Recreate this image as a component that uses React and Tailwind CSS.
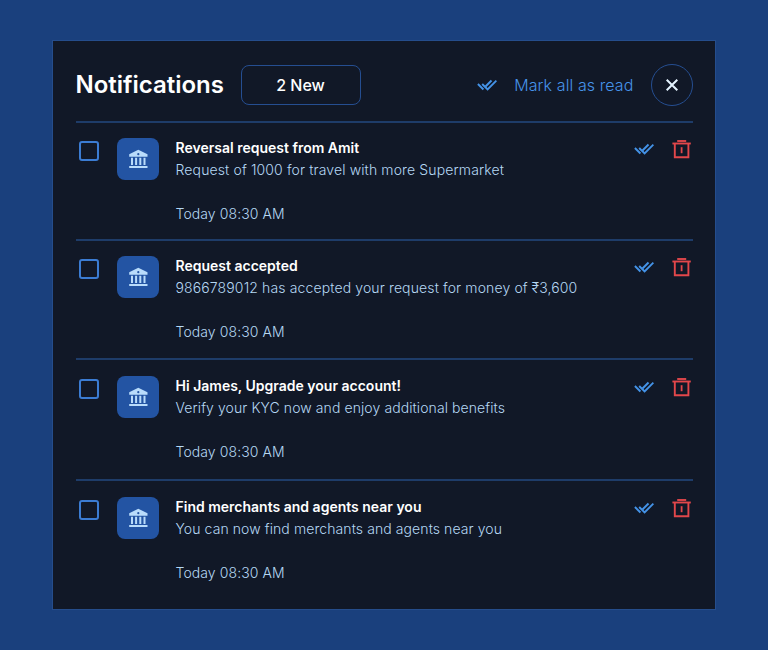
import React from "react";

const items = [
  {
    title: "Reversal request from Amit",
    body: "Request of 1000 for travel with more Supermarket",
    track: "tracking-[0.13px]",
    row: "h-[118px] pt-[15px] border-b-2",
  },
  {
    title: "Request accepted",
    body: "9866789012 has accepted your request for money of ₹3,600",
    track: "tracking-[0.13px]",
    row: "h-[119px] pt-[15px] border-b-2",
  },
  {
    title: "Hi James, Upgrade your account!",
    body: "Verify your KYC now and enjoy additional benefits",
    track: "tracking-[0.09px]",
    row: "h-[121px] pt-4 border-b-2",
  },
  {
    title: "Find merchants and agents near you",
    body: "You can now find merchants and agents near you",
    track: "tracking-[0.09px]",
    row: "h-[121px] pt-4",
  },
];

function DoubleCheck() {
  return (
    <svg className="block h-3 w-5" viewBox="0 0 20 12" fill="none" stroke="#4493e8" strokeWidth="1.9">
      <path d="M0.9 5 L6.4 10.5" />
      <path d="M5.2 5 L10.6 10.4 L19.4 1.6" />
      <path d="M8.5 7.5 L14.5 1.5" />
    </svg>
  );
}

function Trash() {
  return (
    <svg className="block h-5 w-5" viewBox="0 0 20 20" fill="none" stroke="#e2474b" strokeWidth="1.9">
      <path d="M5.2 2 H14.2" />
      <path d="M0.4 4.5 H18.8" />
      <path d="M2.8 4.4 V18.3 H16.4 V4.4" />
      <path d="M9.6 8.2 V14.2" strokeWidth="1.8" />
    </svg>
  );
}

function Bank() {
  return (
    <svg className="block h-5 w-5" viewBox="0 0 20 20" fill="#b9dcfb">
      <path fillRule="evenodd" d="M10.3 0.8 L19.5 5.3 V7.8 H1.2 V5.3 Z M10.3 4.1 A1.1 1.1 0 1 0 10.3 6.3 A1.1 1.1 0 1 0 10.3 4.1 Z" />
      <path d="M3 8.7 H5 V16 H3 Z M7.1 8.7 H9.1 V16 H7.1 Z M11.3 8.7 H13.3 V16 H11.3 Z M15.5 8.7 H17.5 V16 H15.5 Z" />
      <path d="M1.2 17 H19.5 V19 H1.2 Z" />
    </svg>
  );
}

function Row({ item }) {
  return (
    <li className={`flex items-start border-[#1e3c69] ${item.row}`}>
      <span className="ml-[3px] mt-[3px] h-5 w-5 shrink-0 rounded-[3px] border-2 border-[#3b7cd3]" />
      <span className="ml-[18.5px] flex h-[42px] w-[42px] shrink-0 items-center justify-center rounded-lg bg-[#2354a3]">
        <Bank />
      </span>
      <div className="-mt-px ml-[16.5px] grow whitespace-nowrap text-sm font-[350] leading-[22px] text-[#b5d7f3]">
        <h2 className="font-semibold leading-[22px] text-white">{item.title}</h2>
        <p className={`leading-[22px] ${item.track}`}>{item.body}</p>
        <p className="mt-[22px] leading-[22px] tracking-[0.09px]">Today 08:30 AM</p>
      </div>
      <button className="mr-[18px] mt-[5px]" aria-label="Mark as read">
        <DoubleCheck />
      </button>
      <button className="mr-[0.5px] mt-px" aria-label="Delete">
        <Trash />
      </button>
    </li>
  );
}

export default function App() {
  return (
    <main className="flex h-[650px] w-[768px] items-start bg-[#1a407d] pl-[52px] pt-10 font-['Inter',sans-serif]">
      <section className="h-[570px] w-[664px] border border-[#254d8c] bg-[#111827] pl-[22.5px] pr-[22.5px]">
        <header className="flex h-[82px] items-center border-b-2 border-[#1e3c69] pt-2">
          <h1 className="w-[165px] shrink-0 whitespace-nowrap text-2xl font-semibold text-white">
            <span className="tracking-[-0.02px]">Notifications</span>
          </h1>
          <span className="flex h-10 w-[120px] shrink-0 items-center justify-center rounded-lg border border-[#254e91] text-base font-medium text-white">
            2 New
          </span>
          <button className="ml-auto flex items-center gap-[17px] whitespace-nowrap text-base font-[350] text-[#4693e9]">
            <DoubleCheck />
            <span className="tracking-[0.1px]">Mark all as read</span>
          </button>
          <button className="ml-[17px] flex h-[42px] w-[42px] shrink-0 items-center justify-center rounded-full border border-[#254e91]" aria-label="Close">
            <svg className="h-3 w-3" viewBox="0 0 12 12" fill="none" stroke="#e4f3ff" strokeWidth="2">
              <path d="M0.7 0.7 L11.3 11.3 M11.3 0.7 L0.7 11.3" />
            </svg>
          </button>
        </header>
        <ul>
          {items.map((item) => (
            <Row key={item.title} item={item} />
          ))}
        </ul>
      </section>
    </main>
  );
}
